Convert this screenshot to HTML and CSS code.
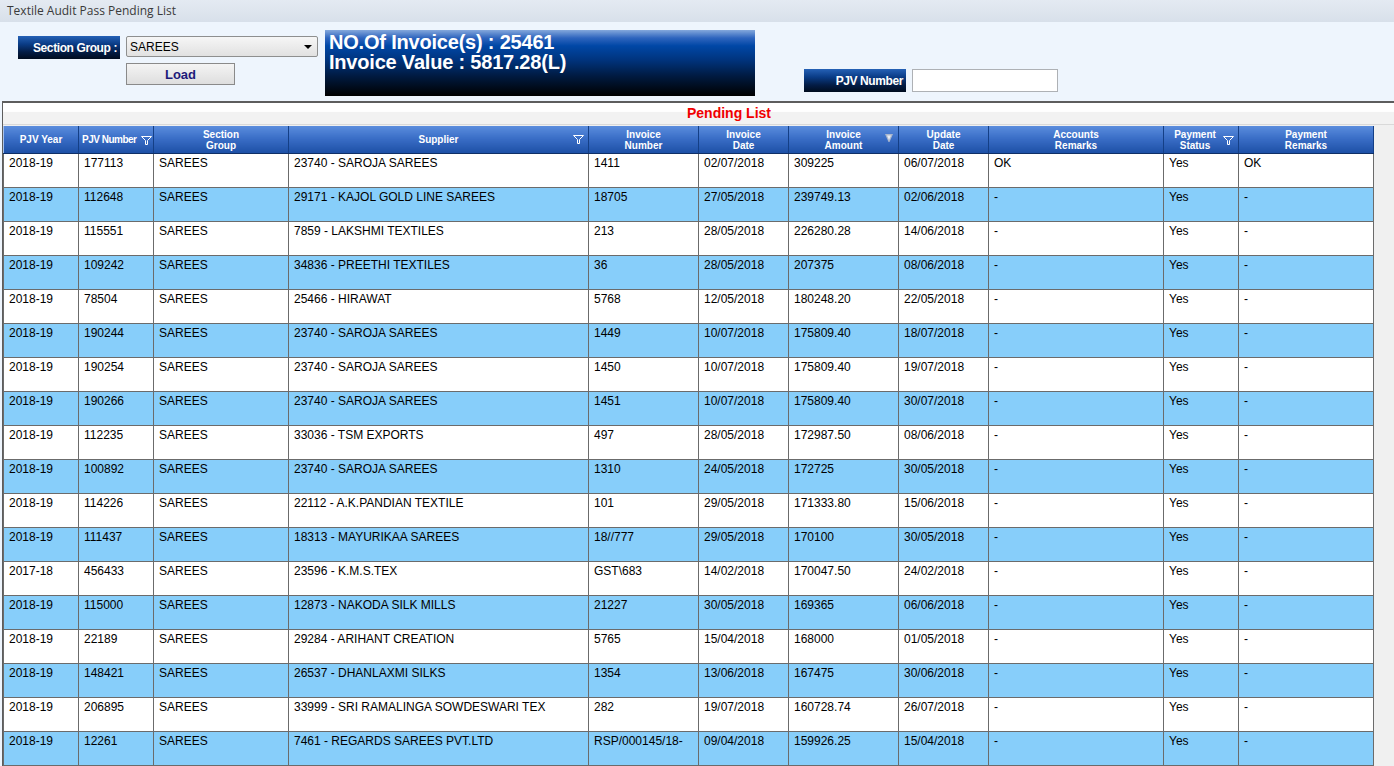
FILE: index.html
```html
<!DOCTYPE html>
<html>
<head>
<meta charset="utf-8">
<title>Textile Audit Pass Pending List</title>
<link rel="stylesheet" href="styles.css">
</head>
<body>
<div class="window">
  <div class="titlebar">Textile Audit Pass Pending List</div>
  <div class="toolbar">
    <div class="sec-col">
      <div class="sec-row">
        <div class="label sec-label">Section Group :</div>
        <div class="select"><span>SAREES</span><span class="arrow"></span></div>
      </div>
      <button class="load-btn">Load</button>
    </div>
    <div class="info">
      <div>NO.Of Invoice(s) : 25461</div>
      <div>Invoice Value : 5817.28(L)</div>
    </div>
    <div class="pjv">
      <div class="label pjv-label">PJV Number</div>
      <div class="pjv-input"></div>
    </div>
  </div>
  <div class="grid">
    <div class="caption"><span>Pending List</span></div>
    <div class="table-wrap">
      <table class="data">
        <colgroup>
          <col style="width:75px"><col style="width:75px"><col style="width:135px"><col style="width:300px">
          <col style="width:110px"><col style="width:90px"><col style="width:110px"><col style="width:90px">
          <col style="width:175px"><col style="width:75px"><col style="width:135px">
        </colgroup>
        <thead>
          <tr>
            <th>PJV Year</th>
            <th class="left">PJV Number<svg class="filter f-pjv" width="11" height="9" viewBox="0 0 11 9"><path d="M0.5 0.5H10.5L6.5 4.5V8.5H4.5V4.5Z" fill="none" stroke="#fff" stroke-width="1"/></svg></th>
            <th>Section<br>Group</th>
            <th>Supplier<svg class="filter f-sup" width="11" height="9" viewBox="0 0 11 9"><path d="M0.5 0.5H10.5L6.5 4.5V8.5H4.5V4.5Z" fill="none" stroke="#fff" stroke-width="1"/></svg></th>
            <th>Invoice<br>Number</th>
            <th>Invoice<br>Date</th>
            <th>Invoice<br>Amount<svg class="filter f-amt" width="8" height="8" viewBox="0 0 8 8"><path d="M0 0H8L4.5 8H3.5Z" fill="#a9b6cc"/><path d="M2 1.5H6L4 6Z" fill="#e8ecf3"/></svg></th>
            <th>Update<br>Date</th>
            <th>Accounts<br>Remarks</th>
            <th class="pay">Payment<br>Status<svg class="filter f-pay" width="11" height="9" viewBox="0 0 11 9"><path d="M0.5 0.5H10.5L6.5 4.5V8.5H4.5V4.5Z" fill="none" stroke="#fff" stroke-width="1"/></svg></th>
            <th>Payment<br>Remarks</th>
          </tr>
        </thead>
        <tbody>
          <tr><td>2018-19</td><td>177113</td><td>SAREES</td><td>23740 - SAROJA SAREES</td><td>1411</td><td>02/07/2018</td><td>309225</td><td>06/07/2018</td><td>OK</td><td>Yes</td><td>OK</td></tr>
          <tr class="alt"><td>2018-19</td><td>112648</td><td>SAREES</td><td>29171 - KAJOL GOLD LINE SAREES</td><td>18705</td><td>27/05/2018</td><td>239749.13</td><td>02/06/2018</td><td>-</td><td>Yes</td><td>-</td></tr>
          <tr><td>2018-19</td><td>115551</td><td>SAREES</td><td>7859 - LAKSHMI TEXTILES</td><td>213</td><td>28/05/2018</td><td>226280.28</td><td>14/06/2018</td><td>-</td><td>Yes</td><td>-</td></tr>
          <tr class="alt"><td>2018-19</td><td>109242</td><td>SAREES</td><td>34836 - PREETHI TEXTILES</td><td>36</td><td>28/05/2018</td><td>207375</td><td>08/06/2018</td><td>-</td><td>Yes</td><td>-</td></tr>
          <tr><td>2018-19</td><td>78504</td><td>SAREES</td><td>25466 - HIRAWAT</td><td>5768</td><td>12/05/2018</td><td>180248.20</td><td>22/05/2018</td><td>-</td><td>Yes</td><td>-</td></tr>
          <tr class="alt"><td>2018-19</td><td>190244</td><td>SAREES</td><td>23740 - SAROJA SAREES</td><td>1449</td><td>10/07/2018</td><td>175809.40</td><td>18/07/2018</td><td>-</td><td>Yes</td><td>-</td></tr>
          <tr><td>2018-19</td><td>190254</td><td>SAREES</td><td>23740 - SAROJA SAREES</td><td>1450</td><td>10/07/2018</td><td>175809.40</td><td>19/07/2018</td><td>-</td><td>Yes</td><td>-</td></tr>
          <tr class="alt"><td>2018-19</td><td>190266</td><td>SAREES</td><td>23740 - SAROJA SAREES</td><td>1451</td><td>10/07/2018</td><td>175809.40</td><td>30/07/2018</td><td>-</td><td>Yes</td><td>-</td></tr>
          <tr><td>2018-19</td><td>112235</td><td>SAREES</td><td>33036 - TSM EXPORTS</td><td>497</td><td>28/05/2018</td><td>172987.50</td><td>08/06/2018</td><td>-</td><td>Yes</td><td>-</td></tr>
          <tr class="alt"><td>2018-19</td><td>100892</td><td>SAREES</td><td>23740 - SAROJA SAREES</td><td>1310</td><td>24/05/2018</td><td>172725</td><td>30/05/2018</td><td>-</td><td>Yes</td><td>-</td></tr>
          <tr><td>2018-19</td><td>114226</td><td>SAREES</td><td>22112 - A.K.PANDIAN TEXTILE</td><td>101</td><td>29/05/2018</td><td>171333.80</td><td>15/06/2018</td><td>-</td><td>Yes</td><td>-</td></tr>
          <tr class="alt"><td>2018-19</td><td>111437</td><td>SAREES</td><td>18313 - MAYURIKAA SAREES</td><td>18//777</td><td>29/05/2018</td><td>170100</td><td>30/05/2018</td><td>-</td><td>Yes</td><td>-</td></tr>
          <tr><td>2017-18</td><td>456433</td><td>SAREES</td><td>23596 - K.M.S.TEX</td><td>GST\683</td><td>14/02/2018</td><td>170047.50</td><td>24/02/2018</td><td>-</td><td>Yes</td><td>-</td></tr>
          <tr class="alt"><td>2018-19</td><td>115000</td><td>SAREES</td><td>12873 - NAKODA SILK MILLS</td><td>21227</td><td>30/05/2018</td><td>169365</td><td>06/06/2018</td><td>-</td><td>Yes</td><td>-</td></tr>
          <tr><td>2018-19</td><td>22189</td><td>SAREES</td><td>29284 - ARIHANT CREATION</td><td>5765</td><td>15/04/2018</td><td>168000</td><td>01/05/2018</td><td>-</td><td>Yes</td><td>-</td></tr>
          <tr class="alt"><td>2018-19</td><td>148421</td><td>SAREES</td><td>26537 - DHANLAXMI SILKS</td><td>1354</td><td>13/06/2018</td><td>167475</td><td>30/06/2018</td><td>-</td><td>Yes</td><td>-</td></tr>
          <tr><td>2018-19</td><td>206895</td><td>SAREES</td><td>33999 - SRI RAMALINGA SOWDESWARI TEX</td><td>282</td><td>19/07/2018</td><td>160728.74</td><td>26/07/2018</td><td>-</td><td>Yes</td><td>-</td></tr>
          <tr class="alt"><td>2018-19</td><td>12261</td><td>SAREES</td><td>7461 - REGARDS SAREES PVT.LTD</td><td>RSP/000145/18-</td><td>09/04/2018</td><td>159926.25</td><td>15/04/2018</td><td>-</td><td>Yes</td><td>-</td></tr>
        </tbody>
      </table>
    </div>
  </div>
</div>
</body>
</html>
```
FILE: styles.css
```css
html, body {
  margin: 0;
  padding: 0;
  height: 766px;
  overflow: hidden;
  font-family: "Liberation Sans", Arial, sans-serif;
  background: #eef5fd;
}
.window {
  width: 1394px;
  height: 766px;
  overflow: hidden;
}
.titlebar {
  height: 22px;
  line-height: 22px;
  padding-left: 7px;
  font-family: "Open Sans", "Noto Sans", sans-serif;
  font-size: 12px;
  color: #3a3a3a;
  background: linear-gradient(#e4eaf2, #d8e0ea);
}
.toolbar {
  display: flex;
  align-items: flex-start;
  height: 79px;
  box-sizing: border-box;
  padding: 8px 0 0 18px;
}
.sec-col {
  display: flex;
  flex-direction: column;
  margin-top: 6px;
}
.sec-row {
  display: flex;
  align-items: flex-start;
  gap: 6px;
}
.label {
  height: 23px;
  box-sizing: border-box;
  width: 102px;
  color: #fff;
  font-weight: bold;
  font-size: 12px;
  line-height: 24px;
  text-align: right;
  padding-right: 3px;
  letter-spacing: -0.4px;
  background: linear-gradient(#2561b6 0%, #0a3c86 35%, #031c45 70%, #000c1e 100%);
}
.select {
  width: 192px;
  height: 21px;
  box-sizing: border-box;
  border: 1px solid #8e8f8f;
  border-radius: 2px;
  background: linear-gradient(#f6f6f6, #e1e1e1);
  display: flex;
  align-items: center;
  justify-content: space-between;
  padding: 0 5px 0 3px;
  font-size: 12px;
  color: #000;
}
.arrow {
  width: 0;
  height: 0;
  border-left: 4px solid transparent;
  border-right: 4px solid transparent;
  border-top: 4px solid #000;
}
.load-btn {
  margin: 4px 0 0 108px;
  width: 109px;
  height: 22px;
  border: 1px solid #8a8a8a;
  border-radius: 0;
  background: linear-gradient(#f4f4f4, #dedede);
  font-family: "Liberation Sans", Arial, sans-serif;
  font-weight: bold;
  font-size: 13px;
  color: #1d1a7a;
  padding: 0;
}
.info {
  margin-left: 7px;
  width: 430px;
  height: 66px;
  box-sizing: border-box;
  padding: 2px 4px;
  color: #fff;
  font-weight: bold;
  font-size: 20px;
  line-height: 20px;
  letter-spacing: -0.2px;
  background: linear-gradient(#84a8dc 0%, #2f65be 12%, #0047a6 24%, #00347e 45%, #001a40 70%, #000 100%);
}
.pjv {
  display: flex;
  gap: 6px;
  margin: 39px 0 0 49px;
}
.pjv-input {
  width: 146px;
  height: 23px;
  box-sizing: border-box;
  border: 1px solid #aeb1b5;
  background: #fff;
}
.grid {
  margin-left: 2px;
  border-top: 2px solid #5d5d5d;
  border-left: 1px solid #5d5d5d;
  background: #f0f0f0;
  height: 700px;
}
.caption {
  height: 22px;
  box-sizing: border-box;
  background: linear-gradient(#ffffff 0%, #ffffff 40%, #f2f2f2 45%, #f2f2f2 100%);
  border-bottom: 1px solid #d9d9d9;
  padding-left: 684px;
  font-weight: bold;
  font-size: 14px;
  line-height: 21px;
  color: #f00000;
}
.table-wrap {
  padding-top: 1px;
}
.data {
  border-collapse: collapse;
  table-layout: fixed;
  width: 1370px;
  font-size: 12px;
  color: #000;
}
.data th {
  position: relative;
  height: 27px;
  padding: 0 4px;
  background: linear-gradient(#5b8ddd 0%, #3a6ec7 45%, #1d50a6 100%);
  color: #fff;
  font-size: 10px;
  line-height: 11px;
  font-weight: bold;
  text-align: center;
  border-left: 1px solid #a7c1ea;
  border-right: 1px solid #143f86;
  border-bottom: 1px solid #0f2f66;
}
.data th.left {
  text-align: left;
  padding-left: 3px;
  letter-spacing: -0.5px;
}
.data th.pay {
  padding-right: 16px;
}
.filter {
  position: absolute;
}
.f-pjv { right: 1px; top: 10px; }
.f-sup { right: 4px; top: 9px; }
.f-amt { right: 5px; top: 8px; }
.f-pay { right: 4px; top: 10px; }
.data td {
  height: 34px;
  box-sizing: border-box;
  vertical-align: top;
  padding: 2px 5px 0 5px;
  border: 1px solid #6b6b6b;
  background: #fff;
  white-space: nowrap;
  overflow: hidden;
  line-height: 14px;
}
.data tr.alt td {
  background: #87cefa;
}
.data tbody tr:first-child td {
  border-top: none;
}
```
